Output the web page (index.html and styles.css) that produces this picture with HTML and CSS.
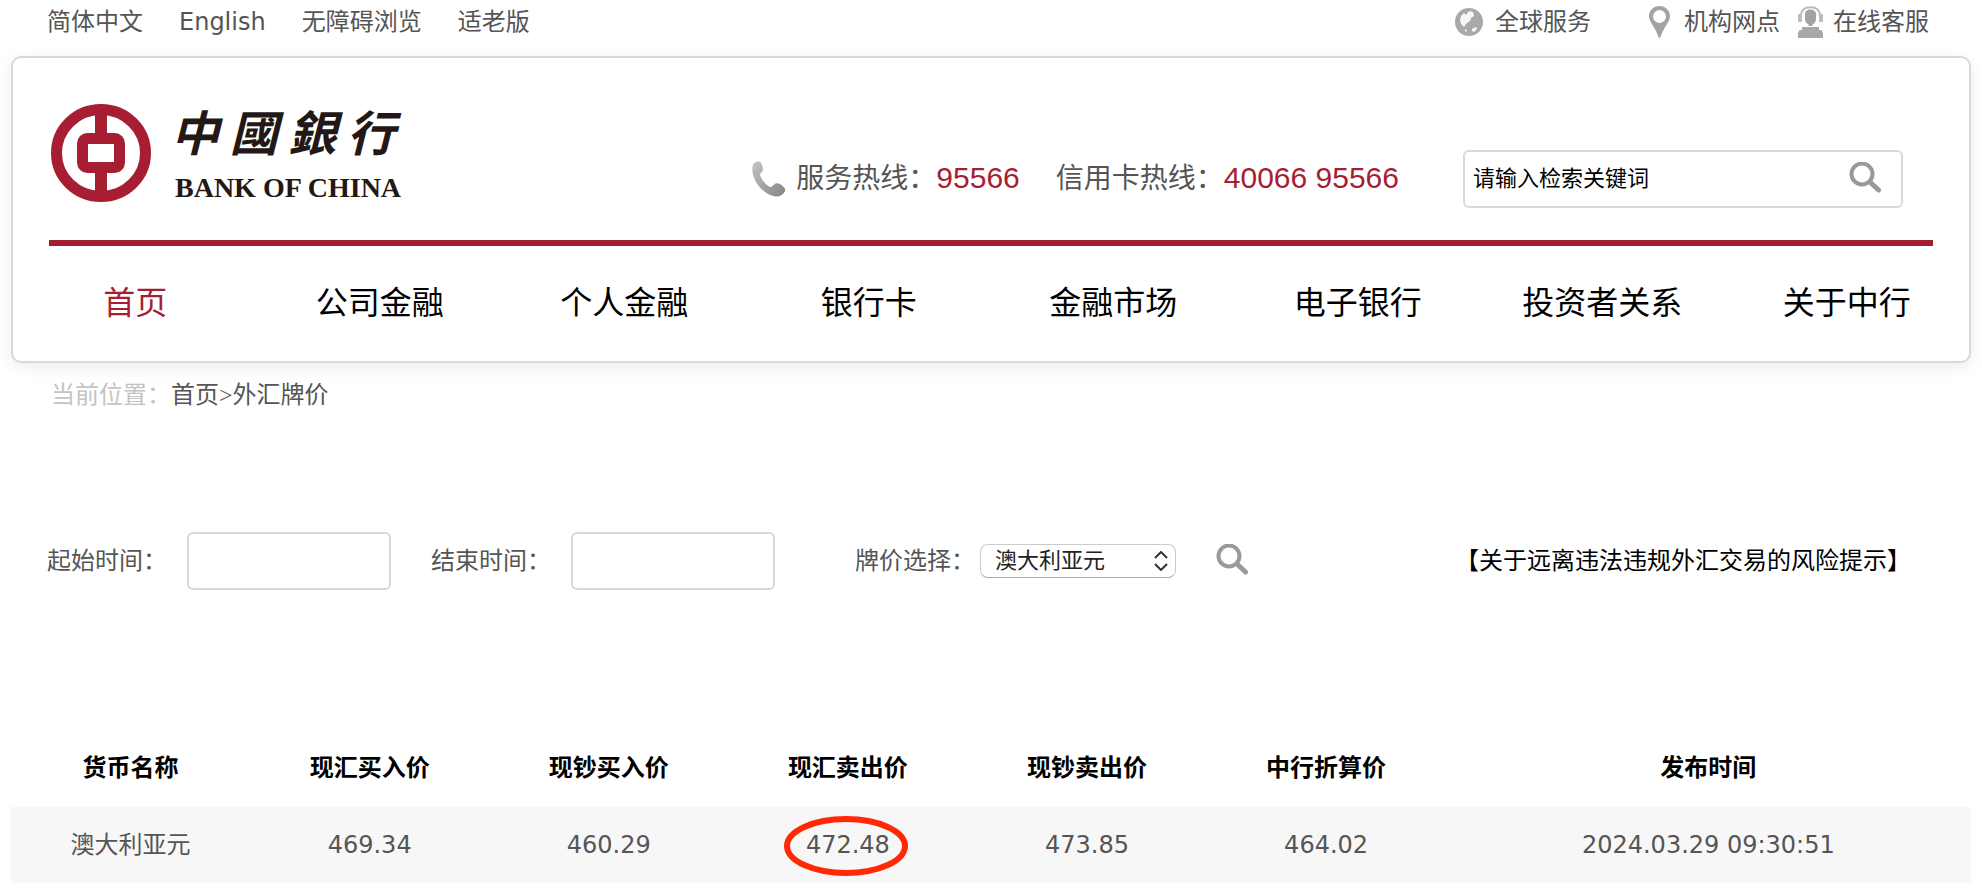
FILE: index.html
```html
<!DOCTYPE html>
<html lang="zh-CN">
<head>
<meta charset="utf-8">
<title>中国银行外汇牌价</title>
<link rel="stylesheet" href="styles.css">
</head>
<body>
<svg class="defs" aria-hidden="true">
  <symbol id="magnifier" viewBox="0 0 32 31">
    <circle cx="13" cy="12" r="10.5" fill="none" stroke="currentColor" stroke-width="4"/>
    <path d="M21 20l8.500 8" stroke="currentColor" stroke-width="5" stroke-linecap="round"/>
  </symbol>
</svg>

<div class="topbar">
  <nav class="languages">
    <a href="#">简体中文</a>
    <a href="#">English</a>
    <a href="#">无障碍浏览</a>
    <a href="#">适老版</a>
  </nav>
  <nav class="services">
    <a class="service service-global" href="#">
      <svg width="28" height="28" viewBox="0 0 28 28" aria-hidden="true">
        <circle cx="14" cy="14" r="14" fill="#a9a9a9"/>
        <path d="M6 8l3-3 2 2 3-4 4 1 1 4-3 2-1 3-4 3-2 3-3-3-1-4z" fill="#f7f7f7"/>
        <path d="M17 21l4-2 1 2-3 3-2-1zM10 21l2 1-1 2-1-1z" fill="#f7f7f7"/>
      </svg>
      <span>全球服务</span>
    </a>
    <a class="service service-branch" href="#">
      <svg width="21" height="32" viewBox="0 0 21 32" aria-hidden="true">
        <path fill-rule="evenodd" d="M10.500 0C4.500 0 0 4.600 0 10.300C0 16 6.500 21 9.500 31.500h2C14.500 21 21 16 21 10.300C21 4.600 16.500 0 10.500 0zm0 4a6.500 6.500 0 110 13a6.500 6.500 0 010-13z" fill="#a3a3a3"/>
      </svg>
      <span>机构网点</span>
    </a>
    <a class="service service-chat" href="#">
      <svg width="25" height="32" viewBox="0 0 25 32" aria-hidden="true">
        <path d="M3 10C3 4 7 1.200 12.500 1.200S22 4 22 10" fill="none" stroke="#bdbdbd" stroke-width="2"/>
        <rect y="8" width="4" height="8" rx="1" fill="#bdbdbd"/>
        <rect x="21" y="8" width="4" height="8" rx="1" fill="#bdbdbd"/>
        <path d="M7 8c0-6 11-6 11 0v5c0 3-2 5-3.500 5v2h-4v-2C9 18 7 16 7 13z" fill="#a3a3a3"/>
        <path d="M4 21h17v3h2.500l1.500 3v5H0v-5l1.500-3H4z" fill="#a8a8a8"/>
      </svg>
      <span>在线客服</span>
    </a>
  </nav>
</div>

<header class="card">
  <div class="masthead">
    <a class="logo" href="#" aria-label="中國銀行 BANK OF CHINA">
      <svg width="100" height="98" viewBox="0 0 100 98" aria-hidden="true">
        <ellipse cx="50" cy="49" rx="44.500" ry="43.500" fill="none" stroke="#a71e32" stroke-width="11"/>
        <path d="M50 2v28M50 68v28" stroke="#a71e32" stroke-width="12"/>
        <rect x="31.500" y="34.500" width="37" height="29" rx="5" fill="none" stroke="#a71e32" stroke-width="11"/>
      </svg>
      <span class="logo-text">
        <span class="logo-cn"><span>中</span><span>國</span><span>銀</span><span>行</span></span>
        <span class="logo-en">BANK OF CHINA</span>
      </span>
    </a>
    <div class="hotlines">
      <svg class="phone" width="34" height="36" viewBox="0 0 34 36" aria-hidden="true">
        <defs><linearGradient id="handset" x1="0" y1="0" x2="1" y2="1"><stop offset="0" stop-color="#c4c4c4"/><stop offset="1" stop-color="#858585"/></linearGradient></defs>
        <path d="M3 1.500C5 0 7.500 0 9 2c2 3 2.500 7 1 9c-1 1-2 1.500-2 3c1 4 6 10 10 12c1.500.5 3-1.500 4-2.500c2-2 5-1.500 7.500.5s4.500 4 3.500 6c-1 3-5 6-9 5.500C12 34 2 22 .5 11C0 6.500.5 3 3 1.500z" fill="url(#handset)"/>
      </svg>
      <span>服务热线：<strong class="number">95566</strong></span>
      <span class="hotline-card">信用卡热线：<strong class="number">40066 95566</strong></span>
    </div>
    <form class="search">
      <input class="search-input" type="text" placeholder="请输入检索关键词" aria-label="请输入检索关键词">
      <button class="icon-button" type="button" aria-label="搜索"><svg width="32" height="31"><use href="#magnifier"/></svg></button>
    </form>
  </div>
  <nav class="main-nav">
    <a class="current" href="#">首页</a>
    <a href="#">公司金融</a>
    <a href="#">个人金融</a>
    <a href="#">银行卡</a>
    <a href="#">金融市场</a>
    <a href="#">电子银行</a>
    <a href="#">投资者关系</a>
    <a href="#">关于中行</a>
  </nav>
</header>

<main>
  <div class="breadcrumb"><span class="breadcrumb-label">当前位置：</span><a href="#">首页</a>&gt;<a href="#">外汇牌价</a></div>

  <form class="filters">
    <div class="field">
      <label for="start">起始时间：</label>
      <input class="date" id="start" type="text">
    </div>
    <div class="field">
      <label for="end">结束时间：</label>
      <input class="date" id="end" type="text">
    </div>
    <div class="field field-currency">
      <label for="currency">牌价选择：</label>
      <span class="select-box">
        <select id="currency"><option>澳大利亚元</option></select>
        <svg class="chevrons" width="14" height="20" viewBox="0 0 14 20" aria-hidden="true"><path d="M1 7l6-6 6 6M1 13l6 6 6-6" fill="none" stroke="#333" stroke-width="2"/></svg>
      </span>
    </div>
    <button class="icon-button" type="button" aria-label="查询"><svg width="32" height="31"><use href="#magnifier"/></svg></button>
    <a class="notice" href="#">【关于远离违法违规外汇交易的风险提示】</a>
  </form>

  <table class="rates">
    <colgroup><col span="6" class="col-rate"><col></colgroup>
    <thead>
      <tr><th>货币名称</th><th>现汇买入价</th><th>现钞买入价</th><th>现汇卖出价</th><th>现钞卖出价</th><th>中行折算价</th><th>发布时间</th></tr>
    </thead>
    <tbody>
      <tr><td>澳大利亚元</td><td>469.34</td><td>460.29</td><td><span class="marked">472.48<svg class="ring" viewBox="0 0 124 60" aria-hidden="true"><ellipse cx="62" cy="30" rx="59" ry="27" fill="none" stroke="#ff2a05" stroke-width="6"/></svg></span></td><td>473.85</td><td>464.02</td><td>2024.03.29 09:30:51</td></tr>
    </tbody>
  </table>
</main>
</body>
</html>
```
FILE: styles.css
```css
* {
  box-sizing: border-box;
}

body {
  margin: 0;
  background: #fff;
  color: #555;
  font: 24px/24px "DejaVu Sans", "Noto Sans CJK SC", sans-serif;
}

a {
  color: inherit;
  text-decoration: none;
}

svg {
  display: block;
  flex: none;
}

input,
select,
button {
  font: inherit;
  margin: 0;
}

.defs {
  position: absolute;
  width: 0;
  height: 0;
}

.topbar {
  display: flex;
  justify-content: space-between;
  align-items: center;
  height: 44px;
  margin: 0 53px 12px 47px;
}

.languages {
  display: flex;
  gap: 36px;
}

.services {
  display: flex;
  align-items: center;
  font-family: "Liberation Serif", "Noto Sans CJK SC", serif;
}

.service {
  display: flex;
  align-items: center;
  gap: 12px;
}

.service-global {
  margin-right: 58px;
}

.service-branch {
  gap: 14px;
  margin-right: 18px;
}

.service-chat {
  gap: 10px;
}

.card {
  margin: 0 11px;
  border: 2px solid #d9d9d9;
  border-radius: 10px;
  box-shadow: 0 4px 16px rgba(0, 0, 0, 0.08);
}

.masthead {
  display: flex;
  align-items: flex-end;
  margin: 0 36px;
  padding: 46px 30px 32px 2px;
  border-bottom: 6px solid #a01e33;
}

.logo {
  display: flex;
  gap: 20px;
  margin: 0 auto 6px 0;
  color: #231815;
}

.logo-text {
  display: flex;
  flex-direction: column;
  justify-content: space-between;
  width: 224px;
}

.logo-cn {
  display: flex;
  justify-content: space-between;
  font: italic 700 48px/52px "Noto Sans CJK TC", sans-serif;
}

.logo-en {
  padding-left: 4px;
  font: bold 28px/28px "Liberation Serif", serif;
  white-space: nowrap;
}

.hotlines {
  display: flex;
  align-items: center;
  margin-right: 64px;
  font-size: 28px;
  line-height: 58px;
  white-space: nowrap;
}

.phone {
  margin-right: 10px;
}

.hotline-card {
  margin-left: 36px;
}

.number {
  color: #a71e32;
  font-family: "Liberation Sans", sans-serif;
  font-size: 30px;
  font-weight: 400;
}

.search {
  display: flex;
  align-items: center;
  width: 440px;
  height: 58px;
  padding: 0 20px 0 8px;
  border: 2px solid #d9d9d9;
  border-radius: 6px;
}

.search-input {
  flex: 1;
  min-width: 0;
  padding: 0;
  border: 0;
  background: none;
  color: #000;
  font-size: 22px;
  line-height: 32px;
}

.search-input::placeholder {
  color: #000;
  opacity: 1;
}

.icon-button {
  padding: 0 0 4px;
  border: 0;
  background: none;
  color: #999;
}

.main-nav {
  display: grid;
  grid-template-columns: repeat(8, 1fr);
  padding: 37px 0 38px;
  color: #000;
  font-size: 32px;
  line-height: 40px;
  text-align: center;
}

.current {
  color: #a71e32;
}

.breadcrumb {
  padding: 20px 51px 0;
  font-family: "Liberation Serif", "Noto Sans CJK SC", serif;
}

.breadcrumb-label {
  color: #c4c4c4;
}

.filters {
  display: flex;
  align-items: center;
  margin: 125px 71px 139px 47px;
  white-space: nowrap;
}

.field {
  display: flex;
  align-items: center;
  margin-right: 40px;
}

.field label {
  margin-right: 20px;
}

.date {
  width: 204px;
  height: 58px;
  border: 2px solid #d9d9d9;
  border-radius: 6px;
}

.field-currency {
  margin-left: 40px;
}

.field-currency label {
  margin-right: 5px;
}

.select-box {
  position: relative;
}

.select-box select {
  width: 196px;
  height: 34px;
  padding: 0 14px;
  border: 1px solid #ccc;
  border-bottom-color: #aaa;
  border-radius: 8px;
  background: #fff;
  color: #222;
  font-size: 22px;
  line-height: 32px;
  appearance: none;
}

.chevrons {
  position: absolute;
  top: 7px;
  right: 8px;
  pointer-events: none;
}

.notice {
  margin-left: auto;
  color: #000;
}

.rates {
  width: calc(100% - 22px);
  margin: 0 11px;
  border-collapse: collapse;
  table-layout: fixed;
  text-align: center;
}

.col-rate {
  width: 12.2%;
}

.rates th {
  height: 78px;
  padding: 0;
  color: #000;
  font-weight: 700;
}

.rates td {
  height: 76px;
  padding: 0;
  background: #f7f7f7;
}

.marked {
  position: relative;
}

.ring {
  position: absolute;
  top: -15px;
  left: -22px;
  width: 124px;
}
```
